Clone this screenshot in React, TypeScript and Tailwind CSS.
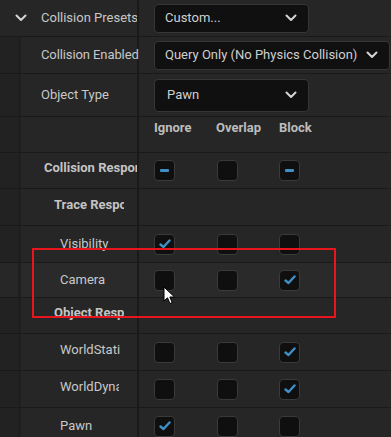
import type { ReactNode } from 'react';

type Check = 'on' | 'off' | 'mixed';

function Chevron({ className = '' }: { className?: string }) {
  return (
    <svg width="12" height="8" viewBox="0 0 12 8" className={className}>
      <polyline points="1.5,1.5 6,6 10.5,1.5" fill="none" stroke="#d4d4d4" strokeWidth="2" strokeLinecap="round" strokeLinejoin="round" />
    </svg>
  );
}

function Box({ state }: { state: Check }) {
  return (
    <div className="w-[21px] h-[21px] rounded-[4px] bg-[#0f0f0f] border border-[#3a3a3a] flex items-center justify-center">
      {state === 'on' && (
        <svg width="12" height="10" viewBox="0 0 12 10">
          <polyline points="1.5,5.5 4.5,8 10.5,1.5" fill="none" stroke="#3f8fc6" strokeWidth="2.4" strokeLinecap="round" strokeLinejoin="round" />
        </svg>
      )}
      {state === 'mixed' && <div className="w-[9px] h-[3px] rounded-[1px] bg-[#3f8fc6]" />}
    </div>
  );
}

function Dropdown({ text, width, height, pad }: { text: string; width: string; height: string; pad: string }) {
  return (
    <div className={`${width} ${height} ${pad} rounded-[4px] bg-[#101010] border border-[#363636] flex items-center justify-between pr-[11px] text-[#cfcfcf]`}>
      <span className="whitespace-nowrap">{text}</span>
      <Chevron />
    </div>
  );
}

function Row({
  height,
  label,
  value,
  gutter = true,
  hover = false,
  clip = true,
}: {
  height: string;
  label: ReactNode;
  value?: ReactNode;
  gutter?: boolean;
  hover?: boolean;
  clip?: boolean;
}) {
  const bg = hover ? 'bg-[#2a2a2a]' : 'bg-[#262626]';
  return (
    <div className={`flex ${height} shrink-0`}>
      <div className={`w-[137px] shrink-0 flex ${bg}`}>
        {gutter && <div className={`w-[21px] shrink-0 h-full border-r-[3px] border-[#1f1f1f] ${hover ? 'bg-[#272727]' : 'bg-[#222222]'}`} />}
        <div className={`flex-1 min-w-0 flex items-center ${clip ? 'overflow-hidden' : 'relative z-10'}`}>{label}</div>
      </div>
      <div className="w-[2px] shrink-0 bg-[#1a1a1a]" />
      <div className={`flex-1 flex items-center pl-[15px] ${bg}`}>{value}</div>
    </div>
  );
}

function Checks({ states }: { states: Check[] }) {
  return (
    <div className="flex">
      {states.map((s, i) => (
        <div key={i} className={i === 1 ? 'w-[62px]' : 'w-[63px]'}>
          <Box state={s} />
        </div>
      ))}
    </div>
  );
}

function Clip({ w, children, bold = false }: { w: string; children: ReactNode; bold?: boolean }) {
  return (
    <span className={`${w} overflow-hidden whitespace-nowrap ${bold ? 'font-bold text-[#c4c4c4]' : ''}`}>{children}</span>
  );
}

export default function App() {
  return (
    <div className="relative w-[391px] h-[437px] overflow-hidden bg-[#1a1a1a] text-[13px] text-[#c8c8c8] font-['Roboto','Liberation_Sans',sans-serif]">
      <div className="flex flex-col gap-px">
        <Row
          height="h-[36px]"
          gutter={false}
          label={
            <div className="flex items-center">
              <Chevron className="ml-[15px] mr-[14px]" />
              <span className="whitespace-nowrap">Collision Presets</span>
            </div>
          }
          value={<Dropdown text="Custom..." width="w-[155px]" height="h-[29px]" pad="pl-[10px]" />}
        />
        <Row
          height="h-[36px]"
          clip={false}
          label={<span className="pl-[20px] whitespace-nowrap tracking-[-0.1px]">Collision Enabled</span>}
          value={<Dropdown text="Query Only (No Physics Collision)" width="w-[236px]" height="h-[29px]" pad="pl-[10px]" />}
        />
        <Row
          height="h-[42px]"
          label={<span className="pl-[20px] whitespace-nowrap">Object Type</span>}
          value={<Dropdown text="Pawn" width="w-[155px]" height="h-[33px]" pad="pl-[12px]" />}
        />
        <div className="flex h-[35px] shrink-0">
          <div className="w-[137px] shrink-0 flex bg-[#262626]">
            <div className="w-[21px] shrink-0 h-full border-r-[3px] border-[#1f1f1f] bg-[#222222]" />
          </div>
          <div className="w-[2px] shrink-0 bg-[#1a1a1a]" />
          <div className="flex-1 flex items-start pt-[3px] pl-[15px] bg-[#262626] font-bold text-[#bdbdbd] leading-[16px]">
            <span className="w-[62px]">Ignore</span>
            <span className="w-[63px]">Overlap</span>
            <span>Block</span>
          </div>
        </div>
        <Row
          height="h-[35px]"
          label={<span className="pl-[23px]"><Clip w="w-[93px] inline-block" bold>Collision Responses</Clip></span>}
          value={<Checks states={['mixed', 'off', 'mixed']} />}
        />
        <Row
          height="h-[36px]"
          label={<span className="pl-[33px]"><Clip w="w-[70px] inline-block" bold>Trace Responses</Clip></span>}
        />
        <Row
          height="h-[36px]"
          label={<span className="pl-[39px]">Visibility</span>}
          value={<Checks states={['on', 'off', 'off']} />}
        />
        <Row
          height="h-[34px]"
          hover
          label={<span className="pl-[39px]">Camera</span>}
          value={<Checks states={['off', 'off', 'on']} />}
        />
        <Row
          height="h-[35px]"
          label={<span className="pl-[33px]"><Clip w="w-[70px] inline-block" bold>Object Responses</Clip></span>}
        />
        <Row
          height="h-[36px]"
          label={<span className="pl-[39px]"><Clip w="w-[60px] inline-block">WorldStatic</Clip></span>}
          value={<Checks states={['off', 'off', 'on']} />}
        />
        <Row
          height="h-[36px]"
          label={<span className="pl-[39px]"><Clip w="w-[59px] inline-block">WorldDynamic</Clip></span>}
          value={<Checks states={['off', 'off', 'on']} />}
        />
        <Row
          height="h-[36px]"
          label={<span className="pl-[39px]">Pawn</span>}
          value={<Checks states={['on', 'off', 'off']} />}
        />
      </div>

      {/* red highlight box */}
      <div className="absolute left-[32px] top-[248px] w-[304px] h-[70px] border-2 border-[#e8161c] pointer-events-none" />

      {/* mouse cursor */}
      <svg className="absolute left-[163px] top-[286px]" width="13" height="19" viewBox="0 0 13 19">
        <path d="M1 1 L1 15 L4.5 11.8 L7 17.5 L9.2 16.5 L6.8 11 L11.5 11 Z" fill="#ffffff" stroke="#000000" strokeWidth="1" strokeLinejoin="round" />
      </svg>
    </div>
  );
}
